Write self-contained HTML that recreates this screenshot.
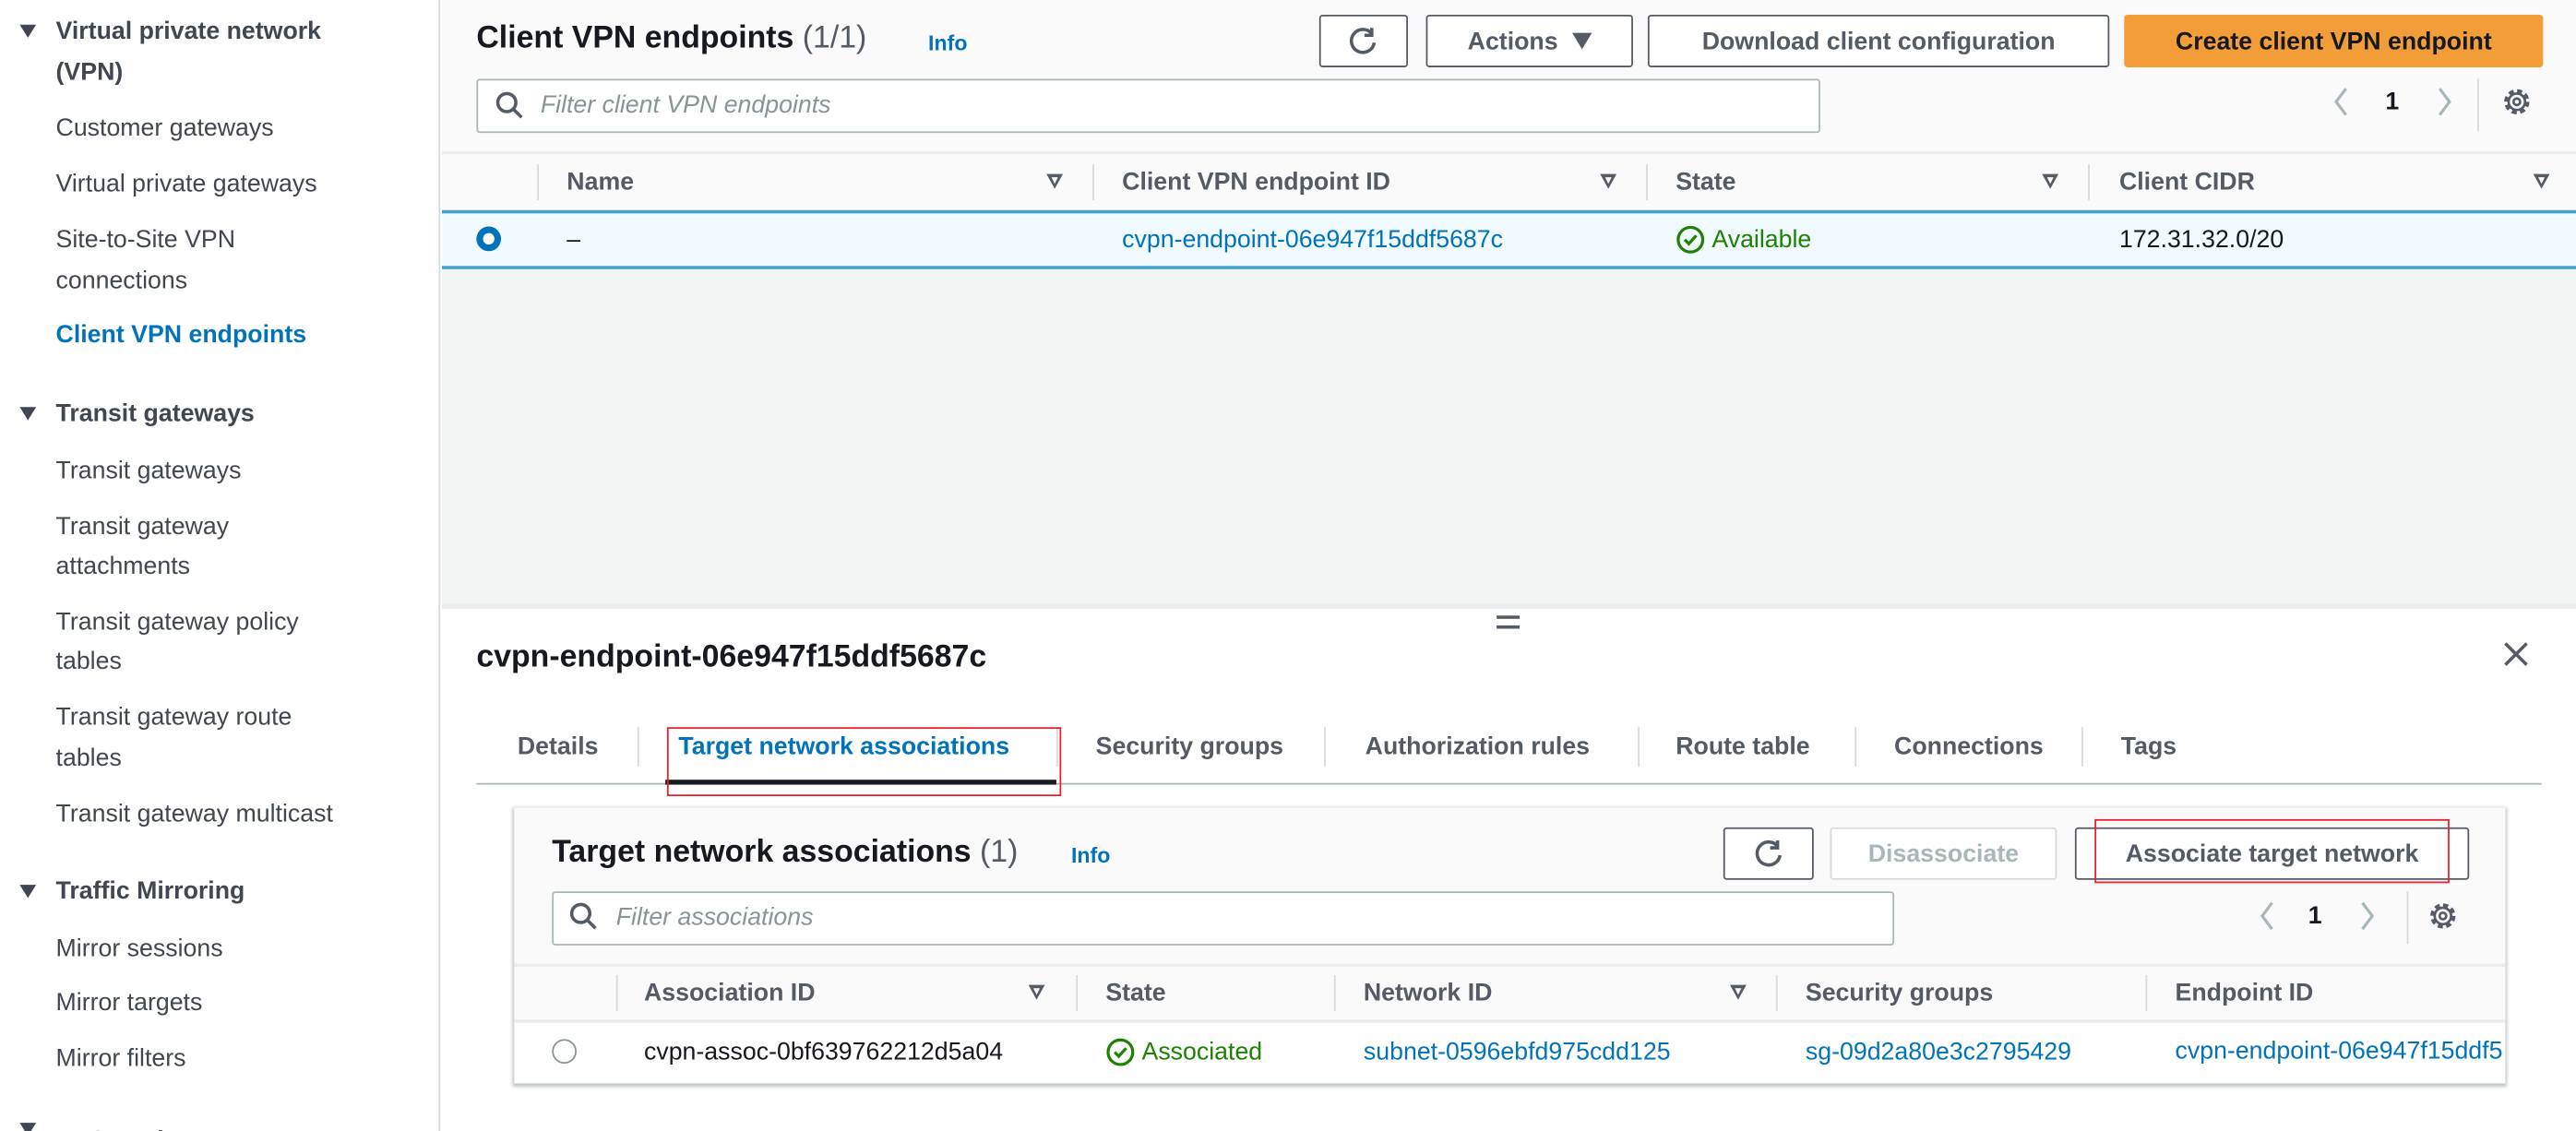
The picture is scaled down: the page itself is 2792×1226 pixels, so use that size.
<!DOCTYPE html>
<html><head><meta charset="utf-8"><style>
*{margin:0;padding:0;box-sizing:border-box}
html,body{width:2792px;height:1226px;overflow:hidden;background:#fff}
#s{position:absolute;left:0;top:0;width:1568px;height:689px;overflow:hidden;transform:scale(1.7806,1.7794);transform-origin:0 0;font-family:"Liberation Sans",Arial,sans-serif;color:#16191f;font-size:15px}
.a{position:absolute;white-space:nowrap}
.nav{left:34px;color:#414750;font-size:15px;transform:translateY(-50%)}
.sec{left:34px;font-weight:bold;font-size:15px;color:#414750;transform:translateY(-50%)}
.tri{position:absolute;left:12px;width:0;height:0;border-left:5px solid transparent;border-right:5px solid transparent;border-top:8px solid #414750}
.btn{position:absolute;border:1.5px solid #545b64;border-radius:2px;background:#fff;font-weight:bold;color:#545b64;font-size:15px;display:flex;align-items:center;justify-content:center}
.c{transform:translateY(-50%)}
.h{font-weight:bold;color:#545b64;font-size:15px}
.sep{position:absolute;width:1px;background:#d5dbdb}
.ft{position:absolute;width:0;height:0;border-left:5px solid transparent;border-right:5px solid transparent;border-top:9px solid #545b64}
.ft:after{content:"";position:absolute;left:-2.5px;top:-7.5px;border-left:2.5px solid transparent;border-right:2.5px solid transparent;border-top:4.5px solid #fafafa}
.lnk{color:#0073bb}
.tab{font-weight:bold;color:#545b64;font-size:15px}
</style></head><body><div id="s">
<div class="a" style="left:0;top:0;width:268px;height:689px;background:#fff;border-right:1px solid #d5dbdb"></div>
<div class="tri" style="top:15px"></div>
<div class="a sec" style="top:19px">Virtual private network</div>
<div class="a sec" style="top:44px">(VPN)</div>
<div class="a nav" style="top:78px">Customer gateways</div>
<div class="a nav" style="top:112px">Virtual private gateways</div>
<div class="a nav" style="top:146px">Site-to-Site VPN</div>
<div class="a nav" style="top:171px">connections</div>
<div class="a nav" style="top:204px;color:#0073bb;font-weight:bold">Client VPN endpoints</div>
<div class="tri" style="top:248px"></div>
<div class="a sec" style="top:252px">Transit gateways</div>
<div class="a nav" style="top:287px">Transit gateways</div>
<div class="a nav" style="top:321px">Transit gateway</div>
<div class="a nav" style="top:345px">attachments</div>
<div class="a nav" style="top:379px">Transit gateway policy</div>
<div class="a nav" style="top:403px">tables</div>
<div class="a nav" style="top:437px">Transit gateway route</div>
<div class="a nav" style="top:462px">tables</div>
<div class="a nav" style="top:496px">Transit gateway multicast</div>
<div class="tri" style="top:539px"></div>
<div class="a sec" style="top:543px">Traffic Mirroring</div>
<div class="a nav" style="top:578px">Mirror sessions</div>
<div class="a nav" style="top:611px">Mirror targets</div>
<div class="a nav" style="top:645px">Mirror filters</div>
<div class="tri" style="top:684px"></div>
<div class="a sec" style="top:695px">VPC settings</div>

<div class="a" style="left:269px;top:0;width:1299px;height:370px;background:#f2f3f3"></div>
<div class="a" style="left:269px;top:0;width:1299px;height:128px;background:#fafafa"></div>
<div class="a c" style="left:290px;top:24px;font-size:19px;font-weight:bold">Client VPN endpoints <span style="font-weight:normal;color:#545b64">(1/1)</span></div>
<div class="a c lnk" style="left:565px;top:26px;font-size:13px;font-weight:bold">Info</div>
<div class="btn" style="left:803px;top:9px;width:54px;height:32px"><svg width="20" height="20" viewBox="0 0 20 20"><path d="M15 5.5A7 7 0 1 0 16.5 11" fill="none" stroke="#545b64" stroke-width="2"/><path d="M15 2v4.5h-4.5" fill="none" stroke="#545b64" stroke-width="2"/></svg></div>
<div class="btn" style="left:868px;top:9px;width:126px;height:32px">Actions&nbsp;&nbsp;<span style="display:inline-block;border-left:6px solid transparent;border-right:6px solid transparent;border-top:10px solid #545b64"></span></div>
<div class="btn" style="left:1003px;top:9px;width:281px;height:32px">Download client configuration</div>
<div class="btn" style="left:1293px;top:9px;width:255px;height:32px;background:#f29d38;border-color:#f29d38;color:#16191f">Create client VPN endpoint</div>
<div class="a" style="left:290px;top:48px;width:818px;height:33px;background:#fff;border:1px solid #aab7b8;border-radius:2px"></div>
<svg class="a" style="left:301px;top:55px" width="18" height="18" viewBox="0 0 18 18"><circle cx="7.5" cy="7.5" r="5.5" fill="none" stroke="#545b64" stroke-width="2"/><path d="M11.5 11.5l5 5" stroke="#545b64" stroke-width="2"/></svg>
<div class="a c" style="left:329px;top:64px;font-style:italic;color:#879596">Filter client VPN endpoints</div>
<svg class="a" style="left:1419px;top:52px" width="12" height="20" viewBox="0 0 12 20"><path d="M9 2L3 10l6 8" fill="none" stroke="#aab7b8" stroke-width="1.8"/></svg>
<div class="a c" style="left:1452px;top:62px;font-weight:bold">1</div>
<svg class="a" style="left:1482px;top:52px" width="12" height="20" viewBox="0 0 12 20"><path d="M3 2l6 8-6 8" fill="none" stroke="#aab7b8" stroke-width="1.8"/></svg>
<div class="sep" style="left:1508px;top:48px;height:32px"></div>
<svg class="a" style="left:1522px;top:52px" width="20" height="20" viewBox="0 0 20 20"><circle cx="10" cy="10" r="6.5" fill="none" stroke="#545b64" stroke-width="2.4" stroke-dasharray="3 2.1"/><circle cx="10" cy="10" r="5" fill="none" stroke="#545b64" stroke-width="1.5"/><circle cx="10" cy="10" r="2" fill="none" stroke="#545b64" stroke-width="1.5"/></svg>
<div class="a" style="left:269px;top:92px;width:1299px;height:2px;background:#eaeded"></div>
<div class="sep" style="left:327px;top:100px;height:22px"></div>
<div class="a c h" style="left:345px;top:111px">Name</div><div class="ft" style="left:637px;top:106px"></div>
<div class="sep" style="left:665px;top:100px;height:22px"></div>
<div class="a c h" style="left:683px;top:111px">Client VPN endpoint ID</div><div class="ft" style="left:974px;top:106px"></div>
<div class="sep" style="left:1002px;top:100px;height:22px"></div>
<div class="a c h" style="left:1020px;top:111px">State</div><div class="ft" style="left:1243px;top:106px"></div>
<div class="sep" style="left:1271px;top:100px;height:22px"></div>
<div class="a c h" style="left:1290px;top:111px">Client CIDR</div><div class="ft" style="left:1542px;top:106px"></div>
<div class="a" style="left:269px;top:128px;width:1299px;height:36px;background:#f1faff;border-top:2px solid #44a1cf;border-bottom:2px solid #44a1cf"></div>
<div class="a" style="left:290px;top:138px;width:15px;height:15px;border-radius:50%;border:4px solid #0073bb;background:#fff"></div>
<div class="a c" style="left:345px;top:146px">–</div>
<div class="a c lnk" style="left:683px;top:146px">cvpn-endpoint-06e947f15ddf5687c</div>
<svg class="a" style="left:1020px;top:137px" width="18" height="18" viewBox="0 0 18 18"><circle cx="9" cy="9" r="7.5" fill="none" stroke="#1d8102" stroke-width="1.8"/><path d="M5.5 9l2.5 2.5 4.5-5" fill="none" stroke="#1d8102" stroke-width="1.8"/></svg>
<div class="a c" style="left:1042px;top:146px;color:#1d8102">Available</div>
<div class="a c" style="left:1290px;top:146px">172.31.32.0/20</div>

<div class="a" style="left:269px;top:368px;width:1299px;height:3px;background:#eaeded"></div>
<div class="a" style="left:911px;top:375px;width:14px;height:2px;background:#545b64"></div>
<div class="a" style="left:911px;top:381px;width:14px;height:2px;background:#545b64"></div>
<div class="a c" style="left:290px;top:401px;font-size:19px;font-weight:bold">cvpn-endpoint-06e947f15ddf5687c</div>
<svg class="a" style="left:1523px;top:390px" width="17" height="17" viewBox="0 0 17 17"><path d="M2 2l13 13M15 2L2 15" stroke="#545b64" stroke-width="2"/></svg>
<div class="a c tab" style="left:315px;top:455px">Details</div>
<div class="sep" style="left:388px;top:443px;height:24px"></div>
<div class="a c tab" style="left:413px;top:455px;color:#0073bb">Target network associations</div>
<div class="sep" style="left:643px;top:443px;height:24px"></div>
<div class="a c tab" style="left:667px;top:455px">Security groups</div>
<div class="sep" style="left:806px;top:443px;height:24px"></div>
<div class="a c tab" style="left:831px;top:455px">Authorization rules</div>
<div class="sep" style="left:997px;top:443px;height:24px"></div>
<div class="a c tab" style="left:1020px;top:455px">Route table</div>
<div class="sep" style="left:1129px;top:443px;height:24px"></div>
<div class="a c tab" style="left:1153px;top:455px">Connections</div>
<div class="sep" style="left:1267px;top:443px;height:24px"></div>
<div class="a c tab" style="left:1291px;top:455px">Tags</div>
<div class="a" style="left:290px;top:477px;width:1257px;height:1px;background:#aab7b8"></div>
<div class="a" style="left:405px;top:475px;width:238px;height:3px;background:#16191f"></div>
<div class="a" style="left:406px;top:443px;width:240px;height:42px;border:1.5px solid #e8202a"></div>

<div class="a" style="left:313px;top:492px;width:1212px;height:168px;background:#fff;box-shadow:0 1px 2px 1px rgba(0,28,36,.25);overflow:hidden">
 <div class="a" style="left:0;top:0;width:1212px;height:130px;background:#fafafa"></div>
</div>
<div class="a c" style="left:336px;top:520px;font-size:19px;font-weight:bold">Target network associations <span style="font-weight:normal;color:#545b64">(1)</span></div>
<div class="a c lnk" style="left:652px;top:521px;font-size:13px;font-weight:bold">Info</div>
<div class="btn" style="left:1049px;top:504px;width:55px;height:32px"><svg width="20" height="20" viewBox="0 0 20 20"><path d="M15 5.5A7 7 0 1 0 16.5 11" fill="none" stroke="#545b64" stroke-width="2"/><path d="M15 2v4.5h-4.5" fill="none" stroke="#545b64" stroke-width="2"/></svg></div>
<div class="btn" style="left:1114px;top:504px;width:138px;height:32px;border-color:#d5dbdb;color:#aab7b8">Disassociate</div>
<div class="btn" style="left:1263px;top:504px;width:240px;height:32px">Associate target network</div>
<div class="a" style="left:1275px;top:499px;width:216px;height:39px;border:1.5px solid #e8202a"></div>
<div class="a" style="left:336px;top:543px;width:817px;height:33px;background:#fff;border:1px solid #aab7b8;border-radius:2px"></div>
<svg class="a" style="left:346px;top:549px" width="18" height="18" viewBox="0 0 18 18"><circle cx="7.5" cy="7.5" r="5.5" fill="none" stroke="#545b64" stroke-width="2"/><path d="M11.5 11.5l5 5" stroke="#545b64" stroke-width="2"/></svg>
<div class="a c" style="left:375px;top:559px;font-style:italic;color:#879596">Filter associations</div>
<svg class="a" style="left:1374px;top:548px" width="12" height="20" viewBox="0 0 12 20"><path d="M9 2L3 10l6 8" fill="none" stroke="#aab7b8" stroke-width="1.8"/></svg>
<div class="a c" style="left:1405px;top:558px;font-weight:bold">1</div>
<svg class="a" style="left:1435px;top:548px" width="12" height="20" viewBox="0 0 12 20"><path d="M3 2l6 8-6 8" fill="none" stroke="#aab7b8" stroke-width="1.8"/></svg>
<div class="sep" style="left:1465px;top:543px;height:32px"></div>
<svg class="a" style="left:1477px;top:548px" width="20" height="20" viewBox="0 0 20 20"><circle cx="10" cy="10" r="6.5" fill="none" stroke="#545b64" stroke-width="2.4" stroke-dasharray="3 2.1"/><circle cx="10" cy="10" r="5" fill="none" stroke="#545b64" stroke-width="1.5"/><circle cx="10" cy="10" r="2" fill="none" stroke="#545b64" stroke-width="1.5"/></svg>
<div class="a" style="left:313px;top:587px;width:1212px;height:2px;background:#eaeded"></div>
<div class="sep" style="left:375px;top:594px;height:22px"></div>
<div class="a c h" style="left:392px;top:605px">Association ID</div><div class="ft" style="left:626px;top:600px"></div>
<div class="sep" style="left:655px;top:594px;height:22px"></div>
<div class="a c h" style="left:673px;top:605px">State</div>
<div class="sep" style="left:812px;top:594px;height:22px"></div>
<div class="a c h" style="left:830px;top:605px">Network ID</div><div class="ft" style="left:1053px;top:600px"></div>
<div class="sep" style="left:1081px;top:594px;height:22px"></div>
<div class="a c h" style="left:1099px;top:605px">Security groups</div>
<div class="sep" style="left:1306px;top:594px;height:22px"></div>
<div class="a c h" style="left:1324px;top:605px">Endpoint ID</div>
<div class="a" style="left:313px;top:621px;width:1212px;height:2px;background:#eaeded"></div>
<div class="a" style="left:336px;top:633px;width:15px;height:15px;border-radius:50%;border:1.5px solid #879596;background:#fff"></div>
<div class="a c" style="left:392px;top:641px">cvpn-assoc-0bf639762212d5a04</div>
<svg class="a" style="left:673px;top:632px" width="18" height="18" viewBox="0 0 18 18"><circle cx="9" cy="9" r="7.5" fill="none" stroke="#1d8102" stroke-width="1.8"/><path d="M5.5 9l2.5 2.5 4.5-5" fill="none" stroke="#1d8102" stroke-width="1.8"/></svg>
<div class="a c" style="left:695px;top:641px;color:#1d8102">Associated</div>
<div class="a c lnk" style="left:830px;top:641px">subnet-0596ebfd975cdd125</div>
<div class="a c lnk" style="left:1099px;top:641px">sg-09d2a80e3c2795429</div>
<div class="a" style="left:1324px;top:630px;width:200px;height:22px;overflow:hidden"><div class="lnk" style="white-space:nowrap;line-height:22px">cvpn-endpoint-06e947f15ddf5687c</div></div>
</div></body></html>
